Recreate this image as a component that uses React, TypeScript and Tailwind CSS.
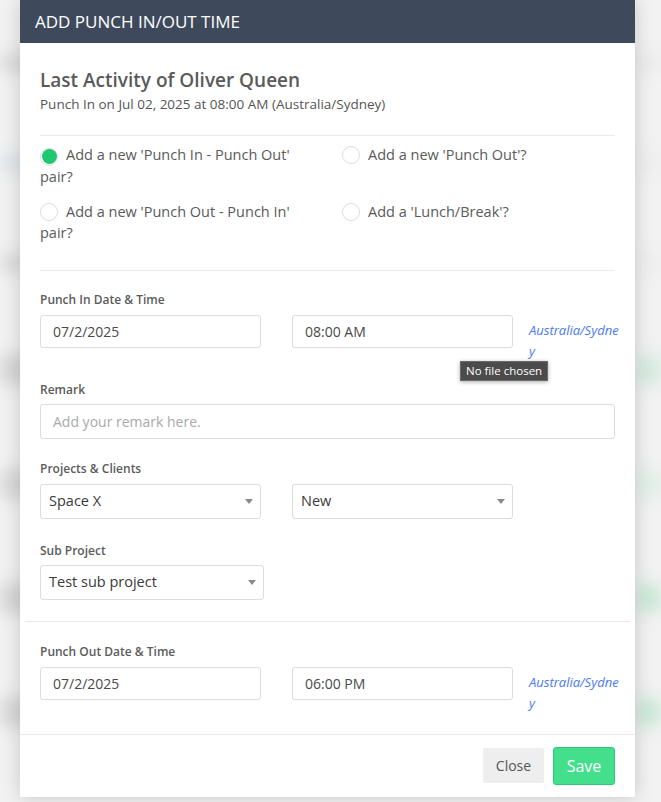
import { ReactNode } from "react";

function Label({ children }: { children: ReactNode }) {
  return (
    <div className="text-[12px] font-semibold leading-4 text-[#5b5b5b]">
      {children}
    </div>
  );
}

function Radio({ checked }: { checked?: boolean }) {
  return (
    <span className="mr-[8px] inline-flex h-[18px] w-[18px] items-center justify-center rounded-full border border-[#dddddd] bg-white align-[-4px]">
      {checked ? (
        <span className="h-[15px] w-[15px] rounded-full bg-[#1ec770]" />
      ) : null}
    </span>
  );
}

function TextBox({ value }: { value: string }) {
  return (
    <div className="flex h-[33px] w-[221px] shrink-0 items-center rounded-[3px] border border-[#dcdcdc] px-[12px] text-[14px] text-[#4a4a4a]">
      {value}
    </div>
  );
}

function SelectBox({ value, width = "w-[221px]" }: { value: string; width?: string }) {
  return (
    <div
      className={`flex h-[35px] ${width} shrink-0 items-center justify-between rounded-[3px] border border-[#dcdcdc] pl-[8px] pr-[7px] text-[14.5px] text-[#3a3a3a]`}
    >
      <span>{value}</span>
      <svg width="8" height="5" viewBox="0 0 8 5">
        <path d="M0 0 L8 0 L4 5 Z" fill="#8a8a8a" />
      </svg>
    </div>
  );
}

function TimeZone() {
  return (
    <div className="mt-[5px] w-[97px] shrink-0 text-[13px] italic leading-[21px] text-[#4a78f5]">
      Australia/Sydne
      <br />y
    </div>
  );
}

function DateTimeRow({ date, time, tooltip }: { date: string; time: string; tooltip?: boolean }) {
  return (
    <div className="mt-[7px] flex items-start">
      <TextBox value={date} />
      <div className="relative ml-[31px] mr-[16px]">
        <TextBox value={time} />
        {tooltip ? (
          <div className="absolute left-[168px] top-[46px] whitespace-nowrap border border-[#6a6a6a] bg-[#4b4b4b] px-[5px] py-[1px] text-[11.5px] leading-[16px] text-white shadow-[0_1px_4px_rgba(0,0,0,0.35)]">
            No file chosen
          </div>
        ) : null}
      </div>
      <TimeZone />
    </div>
  );
}

function Backdrop() {
  const rows = [
    { h: "h-[16px]", l: "bg-[#d8d8d8]", r: "bg-[#e9e9e9]" },
    { h: "h-[16px]", l: "bg-[#dde3e8]", r: "bg-[#ececec]" },
    { h: "h-[16px]", l: "bg-[#d9d9d9]", r: "bg-[#ececec]" },
    { h: "h-[30px]", l: "bg-[#d6d6d6]", r: "bg-[#cfe9dc]" },
    { h: "h-[30px]", l: "bg-[#d8d8d8]", r: "bg-[#dcefe5]" },
    { h: "h-[30px]", l: "bg-[#d6d6d6]", r: "bg-[#c4e7d4]" },
    { h: "h-[30px]", l: "bg-[#d8d8d8]", r: "bg-[#c4e7d4]" },
  ];
  return (
    <div className="absolute inset-0 flex flex-col gap-[84px] pt-[55px] blur-[8px]">
      {rows.map((row, i) => (
        <div key={i} className={`flex ${row.h} justify-between`}>
          <div className={`w-[38px] ${row.l}`} />
          <div className={`w-[24px] rounded-full ${row.r}`} />
        </div>
      ))}
    </div>
  );
}

export default function App() {
  return (
    <div
      className="relative min-h-[802px] w-full overflow-hidden bg-[#f2f2f2]"
      style={{ fontFamily: "'Open Sans', 'Noto Sans', sans-serif" }}
    >
      <Backdrop />

      <div className="relative ml-[20px] w-[615px] bg-white shadow-[0_0_18px_rgba(0,0,0,0.18)]">
        <div className="flex h-[43px] items-center bg-[#3e4a5c] px-[15px] text-[17px] text-white">
          ADD PUNCH IN/OUT TIME
        </div>

        <div className="px-[20px] pt-[25px]">
          <div className="text-[19px] font-semibold leading-6 text-[#5a5a5a]">
            Last Activity of Oliver Queen
          </div>
          <div className="mt-[3px] text-[13.5px] leading-[18px] text-[#555555]">
            Punch In on Jul 02, 2025 at 08:00 AM (Australia/Sydney)
          </div>

          <div className="mt-[22px] border-t border-[#e9e9e9]" />

          <div className="grid grid-cols-[302px_1fr] gap-y-[14px] pt-[8px] text-[14.5px] leading-[21px] text-[#5a5a5a]">
            <div className="pr-[30px]">
              <Radio checked />
              Add a new 'Punch In - Punch Out' pair?
            </div>
            <div>
              <Radio />
              Add a new 'Punch Out'?
            </div>
            <div className="pr-[30px]">
              <Radio />
              Add a new 'Punch Out - Punch In' pair?
            </div>
            <div>
              <Radio />
              Add a 'Lunch/Break'?
            </div>
          </div>

          <div className="mt-[27px] border-t border-[#e9e9e9]" />

          <div className="pt-[21px]">
            <Label>Punch In Date &amp; Time</Label>
            <DateTimeRow date="07/2/2025" time="08:00 AM" tooltip />
          </div>

          <div className="mt-[20px]">
            <Label>Remark</Label>
            <div className="mt-[6px] flex h-[35px] items-center rounded-[3px] border border-[#dcdcdc] px-[12px] text-[14px] text-[#a9a9a9]">
              Add your remark here.
            </div>
          </div>

          <div className="mt-[22px]">
            <Label>Projects &amp; Clients</Label>
            <div className="mt-[7px] flex gap-[31px]">
              <SelectBox value="Space X" />
              <SelectBox value="New" />
            </div>
          </div>

          <div className="mt-[24px] pb-[21px]">
            <Label>Sub Project</Label>
            <div className="mt-[6px]">
              <SelectBox value="Test sub project" width="w-[224px]" />
            </div>
          </div>
        </div>

        <div className="mx-[5px] border-t border-[#e9e9e9]" />

        <div className="px-[20px] pb-[20px] pt-[22px]">
          <Label>Punch Out Date &amp; Time</Label>
          <DateTimeRow date="07/2/2025" time="06:00 PM" />
        </div>

        <div className="flex items-center justify-end gap-[9px] border-t border-[#e9e9e9] px-[20px] pb-[12px] pt-[12px]">
          <button className="h-[35px] w-[61px] rounded-[2px] bg-[#eeeeee] text-[14px] text-[#555555]">
            Close
          </button>
          <button className="h-[38px] w-[62px] rounded-[3px] border border-[#2ec879] bg-[#43df8d] text-[16px] text-white">
            Save
          </button>
        </div>
      </div>
    </div>
  );
}
